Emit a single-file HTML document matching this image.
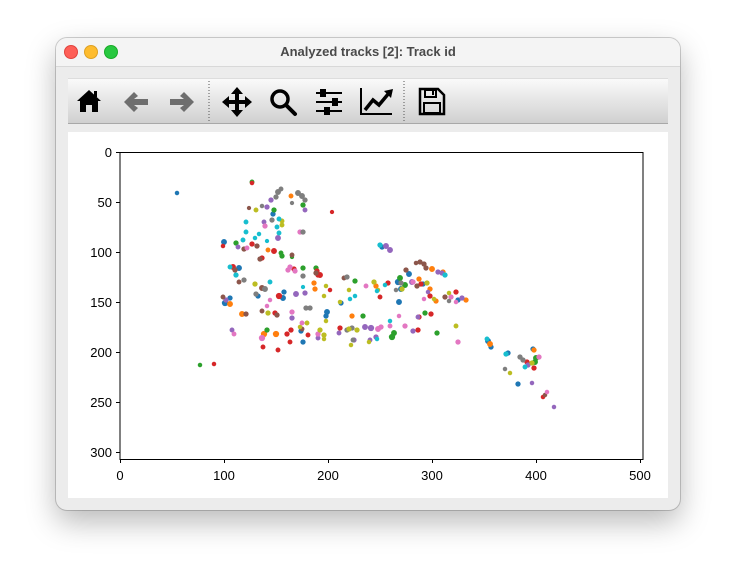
<!DOCTYPE html>
<html><head><meta charset="utf-8"><style>
body{margin:0;width:736px;height:585px;background:#fff;position:relative;overflow:hidden;font-family:"Liberation Sans",sans-serif}
.win{position:absolute;left:56px;top:38px;width:624px;height:472px;border-radius:11px;background:#ececec;box-shadow:0 12px 30px rgba(0,0,0,.28),0 0 0 1px rgba(0,0,0,.18);overflow:hidden}
.tb{position:absolute;left:0;top:0;width:624px;height:28px;background:#f4f4f4;border-bottom:1px solid #d8d8d8}
.dot{position:absolute;top:7px;width:12px;height:12px;border-radius:50%}
.title{position:absolute;left:0;right:0;top:6px;text-align:center;font-size:13px;font-weight:bold;color:#4a4a4a}
.tool{position:absolute;left:12px;top:40px;width:600px;height:44px;background:linear-gradient(#fafafa,#d0d0d0);border-top:1px solid #ddd;border-bottom:1px solid #a8a8a8}
.plot{position:absolute;left:12px;top:94px;width:600px;height:366px;background:#fff}
.pts circle{stroke-width:1.3}
</style></head><body>
<div class="win">
<div class="tb">
<div class="dot" style="left:8px;background:#fe5f57;border:0.5px solid #e0443e"></div>
<div class="dot" style="left:28px;background:#febc2e;border:0.5px solid #dea123"></div>
<div class="dot" style="left:48px;background:#28c840;border:0.5px solid #1aab29"></div>
<div class="title">Analyzed tracks [2]: Track id</div>
</div>
<div class="tool">
<svg width="600" height="44" viewBox="0 0 600 44">
<path d="M9 22 L21 11 L33 22 L30 22 L30 33 L24 33 L24 26 L18 26 L18 33 L12 33 L12 22 Z" fill="#000"/>
<rect x="26" y="12" width="3" height="6" fill="#000"/>
<path d="M56 23 L66 13 L70 17 L66 20 L80 20 L80 26 L66 26 L70 29 L66 33 Z" fill="#6e6e6e"/>
<path d="M126 23 L116 13 L112 17 L116 20 L102 20 L102 26 L116 26 L112 29 L116 33 Z" fill="#6e6e6e"/>
<line x1="141" y1="2" x2="141" y2="42" stroke="#555" stroke-dasharray="1,2"/>
<path d="M169 8 L175 15 L171 15 L171 21 L177 21 L177 17 L184 23 L177 29 L177 25 L171 25 L171 31 L175 31 L169 38 L163 31 L167 31 L167 25 L161 25 L161 29 L154 23 L161 17 L161 21 L167 21 L167 15 L163 15 Z" fill="#000"/>
<circle cx="212" cy="20" r="8" fill="none" stroke="#000" stroke-width="3.5"/>
<line x1="218" y1="26" x2="227" y2="35" stroke="#000" stroke-width="4" stroke-linecap="round"/>
<g stroke="#000" stroke-width="2"><line x1="248" y1="14" x2="274" y2="14"/><line x1="248" y1="23" x2="274" y2="23"/><line x1="248" y1="32" x2="274" y2="32"/></g>
<rect x="252" y="10" width="6" height="8" fill="#000"/><rect x="264" y="19" width="6" height="8" fill="#000"/><rect x="256" y="28" width="6" height="8" fill="#000"/>
<path d="M293 9 L293 35 L324 35" fill="none" stroke="#000" stroke-width="2"/>
<path d="M297 31 L305 21 L311 26 L321 14" fill="none" stroke="#000" stroke-width="3.5"/>
<path d="M316 12 L325 10 L323 19 Z" fill="#000"/>
<line x1="336" y1="2" x2="336" y2="42" stroke="#555" stroke-dasharray="1,2"/>
<path d="M352 10 L370 10 L376 16 L376 35 L352 35 Z" fill="none" stroke="#000" stroke-width="2.5"/>
<rect x="357" y="11" width="11" height="7" fill="none" stroke="#000" stroke-width="2"/>
<rect x="364" y="12" width="2" height="4" fill="#000"/>
<rect x="356" y="24" width="16" height="10" fill="none" stroke="#000" stroke-width="2"/>
</svg>
</div>
<div class="plot"></div>
</div>
<svg style="position:absolute;left:0;top:0" width="736" height="585">
<rect x="120" y="152.5" width="523" height="307" fill="#fff" stroke="#000" stroke-width="1"/>
<g stroke="#000"><line x1="116" y1="152.5" x2="120" y2="152.5"/><line x1="116" y1="202.5" x2="120" y2="202.5"/><line x1="116" y1="252.5" x2="120" y2="252.5"/><line x1="116" y1="302.5" x2="120" y2="302.5"/><line x1="116" y1="352.5" x2="120" y2="352.5"/><line x1="116" y1="402.5" x2="120" y2="402.5"/><line x1="116" y1="452.5" x2="120" y2="452.5"/>
<line x1="120.5" y1="459" x2="120.5" y2="463"/><line x1="224.5" y1="459" x2="224.5" y2="463"/><line x1="328.5" y1="459" x2="328.5" y2="463"/><line x1="432.5" y1="459" x2="432.5" y2="463"/><line x1="536.5" y1="459" x2="536.5" y2="463"/><line x1="640.5" y1="459" x2="640.5" y2="463"/></g>
<g font-family="Liberation Sans,sans-serif" font-size="13" fill="#000" text-anchor="end">
<text x="112" y="157">0</text><text x="112" y="207">50</text><text x="112" y="257">100</text><text x="112" y="307">150</text><text x="112" y="357">200</text><text x="112" y="407">250</text><text x="112" y="457">300</text></g>
<g font-family="Liberation Sans,sans-serif" font-size="13" fill="#000" text-anchor="middle">
<text x="120" y="480">0</text><text x="224" y="480">100</text><text x="328" y="480">200</text><text x="432" y="480">300</text><text x="536" y="480">400</text><text x="640" y="480">500</text></g>
<g class="pts">
<g fill="#1f77b4" stroke="#1f77b4"><circle cx="177" cy="193" r="1.6"/><circle cx="273" cy="214" r="2"/><circle cx="224" cy="242" r="2.3"/><circle cx="239" cy="268" r="2.3"/><circle cx="258" cy="296" r="2"/><circle cx="283" cy="298" r="2.3"/><circle cx="225" cy="303" r="2.5"/><circle cx="327" cy="312" r="2.3"/><circle cx="326" cy="316" r="2"/><circle cx="301" cy="331" r="2"/><circle cx="303" cy="342" r="2"/><circle cx="382" cy="247" r="2"/><circle cx="409" cy="274" r="2.3"/><circle cx="398" cy="282" r="2.5"/><circle cx="399" cy="302" r="2.3"/><circle cx="401" cy="289" r="2.3"/><circle cx="458" cy="300" r="2"/><circle cx="488" cy="341" r="2.3"/><circle cx="491" cy="347" r="2"/><circle cx="508" cy="353" r="2"/><circle cx="533" cy="349" r="2"/><circle cx="518" cy="384" r="2"/><circle cx="284" cy="292" r="2"/><circle cx="341" cy="303" r="2"/><circle cx="423" cy="284" r="2"/><circle cx="230" cy="298" r="2"/></g>
<g fill="#ff7f0e" stroke="#ff7f0e"><circle cx="291" cy="196" r="1.8"/><circle cx="264" cy="334" r="2.5"/><circle cx="276" cy="334" r="2.5"/><circle cx="230" cy="304" r="2.3"/><circle cx="242" cy="314" r="2.3"/><circle cx="314" cy="283" r="2"/><circle cx="432" cy="269" r="2.3"/><circle cx="443" cy="272" r="2"/><circle cx="419" cy="279" r="2"/><circle cx="430" cy="289" r="2"/><circle cx="376" cy="286" r="2"/><circle cx="466" cy="300" r="2"/><circle cx="490" cy="344" r="2.3"/><circle cx="534" cy="350" r="2"/><circle cx="315" cy="289" r="2"/><circle cx="352" cy="316" r="2"/><circle cx="436" cy="301" r="2"/><circle cx="268" cy="250" r="1.8"/></g>
<g fill="#2ca02c" stroke="#2ca02c"><circle cx="252" cy="182" r="1.8"/><circle cx="303" cy="205" r="2"/><circle cx="274" cy="210" r="2"/><circle cx="236" cy="243" r="2"/><circle cx="281" cy="253" r="1.8"/><circle cx="292" cy="257" r="1.5"/><circle cx="316" cy="268" r="2"/><circle cx="267" cy="330" r="2"/><circle cx="282" cy="256" r="2"/><circle cx="303" cy="268" r="2"/><circle cx="400" cy="278" r="2.3"/><circle cx="405" cy="285" r="2.3"/><circle cx="355" cy="281" r="2"/><circle cx="392" cy="337" r="2.5"/><circle cx="394" cy="333" r="2.3"/><circle cx="437" cy="333" r="2"/><circle cx="425" cy="313" r="2"/><circle cx="535" cy="362" r="2.3"/><circle cx="536" cy="358" r="2.3"/><circle cx="363" cy="316" r="2"/><circle cx="200" cy="365" r="1.6"/></g>
<g fill="#d62728" stroke="#d62728"><circle cx="252" cy="183" r="1.6"/><circle cx="332" cy="212" r="1.5"/><circle cx="223" cy="246" r="1.6"/><circle cx="252" cy="244" r="2"/><circle cx="274" cy="251" r="2.3"/><circle cx="262" cy="258" r="2"/><circle cx="233" cy="267" r="2.3"/><circle cx="317" cy="271" r="2"/><circle cx="320" cy="275" r="2.3"/><circle cx="330" cy="290" r="1.6"/><circle cx="279" cy="296" r="2.5"/><circle cx="275" cy="313" r="2"/><circle cx="287" cy="334" r="2"/><circle cx="291" cy="330" r="2"/><circle cx="290" cy="342" r="1.8"/><circle cx="294" cy="269" r="2"/><circle cx="318" cy="275" r="2"/><circle cx="421" cy="284" r="2"/><circle cx="388" cy="283" r="2"/><circle cx="380" cy="297" r="1.8"/><circle cx="430" cy="296" r="2"/><circle cx="456" cy="292" r="2"/><circle cx="419" cy="317" r="2"/><circle cx="418" cy="330" r="2"/><circle cx="340" cy="328" r="2"/><circle cx="527" cy="362" r="2"/><circle cx="534" cy="368" r="2"/><circle cx="543" cy="397" r="1.6"/><circle cx="431" cy="314" r="2"/><circle cx="278" cy="350" r="1.8"/><circle cx="214" cy="364" r="1.6"/><circle cx="263" cy="347" r="1.8"/><circle cx="308" cy="335" r="1.8"/></g>
<g fill="#9467bd" stroke="#9467bd"><circle cx="271" cy="200" r="2"/><circle cx="267" cy="207" r="2"/><circle cx="305" cy="210" r="1.8"/><circle cx="278" cy="238" r="2.3"/><circle cx="264" cy="222" r="1.8"/><circle cx="238" cy="247" r="1.8"/><circle cx="296" cy="294" r="2.3"/><circle cx="226" cy="300" r="2"/><circle cx="292" cy="318" r="2"/><circle cx="318" cy="338" r="1.8"/><circle cx="386" cy="246" r="2.3"/><circle cx="390" cy="250" r="2.3"/><circle cx="438" cy="272" r="2"/><circle cx="442" cy="273" r="2"/><circle cx="412" cy="282" r="2.3"/><circle cx="462" cy="298" r="2"/><circle cx="428" cy="292" r="1.6"/><circle cx="305" cy="293" r="2"/><circle cx="413" cy="331" r="2"/><circle cx="365" cy="327" r="2.3"/><circle cx="371" cy="328" r="2.5"/><circle cx="339" cy="333" r="1.8"/><circle cx="354" cy="340" r="2"/><circle cx="370" cy="340" r="1.8"/><circle cx="528" cy="365" r="2"/><circle cx="532" cy="383" r="1.6"/><circle cx="554" cy="407" r="1.6"/><circle cx="418" cy="317" r="1.8"/><circle cx="376" cy="337" r="2"/><circle cx="232" cy="330" r="1.8"/></g>
<g fill="#8c564b" stroke="#8c564b"><circle cx="244" cy="249" r="2"/><circle cx="257" cy="246" r="2"/><circle cx="260" cy="259" r="2"/><circle cx="235" cy="270" r="2"/><circle cx="239" cy="282" r="1.8"/><circle cx="262" cy="288" r="2.3"/><circle cx="277" cy="315" r="2"/><circle cx="246" cy="314" r="2"/><circle cx="262" cy="311" r="1.8"/><circle cx="223" cy="297" r="1.8"/><circle cx="302" cy="329" r="1.8"/><circle cx="292" cy="255" r="1.8"/><circle cx="316" cy="273" r="2"/><circle cx="420" cy="262" r="2"/><circle cx="424" cy="264" r="2"/><circle cx="426" cy="268" r="2"/><circle cx="416" cy="263" r="1.6"/><circle cx="406" cy="270" r="2"/><circle cx="417" cy="286" r="2"/><circle cx="445" cy="297" r="2"/><circle cx="344" cy="278" r="1.8"/><circle cx="545" cy="395" r="1.6"/><circle cx="249" cy="208" r="1.5"/></g>
<g fill="#e377c2" stroke="#e377c2"><circle cx="265" cy="226" r="2"/><circle cx="247" cy="248" r="1.8"/><circle cx="288" cy="270" r="2"/><circle cx="295" cy="271" r="2"/><circle cx="267" cy="306" r="1.6"/><circle cx="270" cy="300" r="1.6"/><circle cx="292" cy="312" r="2"/><circle cx="262" cy="338" r="2.5"/><circle cx="302" cy="323" r="1.8"/><circle cx="318" cy="334" r="2"/><circle cx="300" cy="232" r="2"/><circle cx="290" cy="267" r="2"/><circle cx="413" cy="282" r="2"/><circle cx="366" cy="286" r="1.8"/><circle cx="451" cy="297" r="2"/><circle cx="456" cy="302" r="1.6"/><circle cx="458" cy="342" r="2"/><circle cx="378" cy="329" r="2.3"/><circle cx="381" cy="327" r="2"/><circle cx="405" cy="326" r="2"/><circle cx="390" cy="326" r="1.8"/><circle cx="399" cy="316" r="1.6"/><circle cx="539" cy="357" r="2"/><circle cx="547" cy="392" r="1.6"/><circle cx="424" cy="299" r="1.6"/><circle cx="234" cy="334" r="1.8"/></g>
<g fill="#7f7f7f" stroke="#7f7f7f"><circle cx="278" cy="192" r="2.3"/><circle cx="276" cy="197" r="2"/><circle cx="281" cy="189" r="1.8"/><circle cx="262" cy="206" r="1.6"/><circle cx="292" cy="203" r="1.5"/><circle cx="298" cy="193" r="2.3"/><circle cx="302" cy="196" r="2.3"/><circle cx="305" cy="200" r="2"/><circle cx="272" cy="220" r="2"/><circle cx="244" cy="280" r="2"/><circle cx="265" cy="289" r="2.3"/><circle cx="256" cy="294" r="2"/><circle cx="306" cy="308" r="2"/><circle cx="310" cy="308" r="2"/><circle cx="303" cy="232" r="2"/><circle cx="303" cy="276" r="2"/><circle cx="347" cy="277" r="2"/><circle cx="401" cy="283" r="2"/><circle cx="396" cy="290" r="1.6"/><circle cx="449" cy="301" r="1.6"/><circle cx="352" cy="328" r="2"/><circle cx="353" cy="340" r="1.8"/><circle cx="520" cy="357" r="2"/><circle cx="523" cy="360" r="2"/><circle cx="505" cy="369" r="1.6"/><circle cx="347" cy="330" r="2"/></g>
<g fill="#bcbd22" stroke="#bcbd22"><circle cx="256" cy="210" r="1.8"/><circle cx="282" cy="225" r="1.8"/><circle cx="255" cy="284" r="2"/><circle cx="268" cy="313" r="2"/><circle cx="326" cy="321" r="1.6"/><circle cx="307" cy="323" r="1.8"/><circle cx="320" cy="330" r="2"/><circle cx="324" cy="335" r="2"/><circle cx="324" cy="339" r="1.6"/><circle cx="326" cy="286" r="1.6"/><circle cx="282" cy="221" r="1.8"/><circle cx="402" cy="289" r="2"/><circle cx="374" cy="282" r="2"/><circle cx="378" cy="290" r="1.6"/><circle cx="349" cy="290" r="1.6"/><circle cx="427" cy="283" r="2"/><circle cx="449" cy="293" r="1.6"/><circle cx="434" cy="299" r="1.6"/><circle cx="357" cy="330" r="2"/><circle cx="349" cy="329" r="2"/><circle cx="351" cy="345" r="1.6"/><circle cx="369" cy="342" r="1.6"/><circle cx="456" cy="326" r="1.8"/><circle cx="532" cy="363" r="2"/><circle cx="510" cy="373" r="1.6"/><circle cx="324" cy="296" r="1.6"/><circle cx="340" cy="302" r="1.6"/><circle cx="300" cy="327" r="1.6"/></g>
<g fill="#17becf" stroke="#17becf"><circle cx="279" cy="219" r="1.8"/><circle cx="277" cy="227" r="1.8"/><circle cx="279" cy="233" r="1.8"/><circle cx="246" cy="222" r="1.8"/><circle cx="246" cy="232" r="1.8"/><circle cx="243" cy="240" r="1.8"/><circle cx="259" cy="234" r="1.6"/><circle cx="255" cy="238" r="1.6"/><circle cx="236" cy="275" r="2"/><circle cx="270" cy="282" r="1.8"/><circle cx="303" cy="287" r="1.5"/><circle cx="380" cy="245" r="2"/><circle cx="445" cy="275" r="2"/><circle cx="385" cy="285" r="1.6"/><circle cx="377" cy="291" r="1.6"/><circle cx="350" cy="299" r="1.6"/><circle cx="355" cy="296" r="1.6"/><circle cx="390" cy="321" r="1.6"/><circle cx="377" cy="339" r="1.6"/><circle cx="487" cy="339" r="1.8"/><circle cx="506" cy="354" r="2"/><circle cx="525" cy="367" r="1.8"/><circle cx="230" cy="267" r="1.8"/><circle cx="267" cy="241" r="1.5"/></g>
</g>
</svg>
</body></html>
